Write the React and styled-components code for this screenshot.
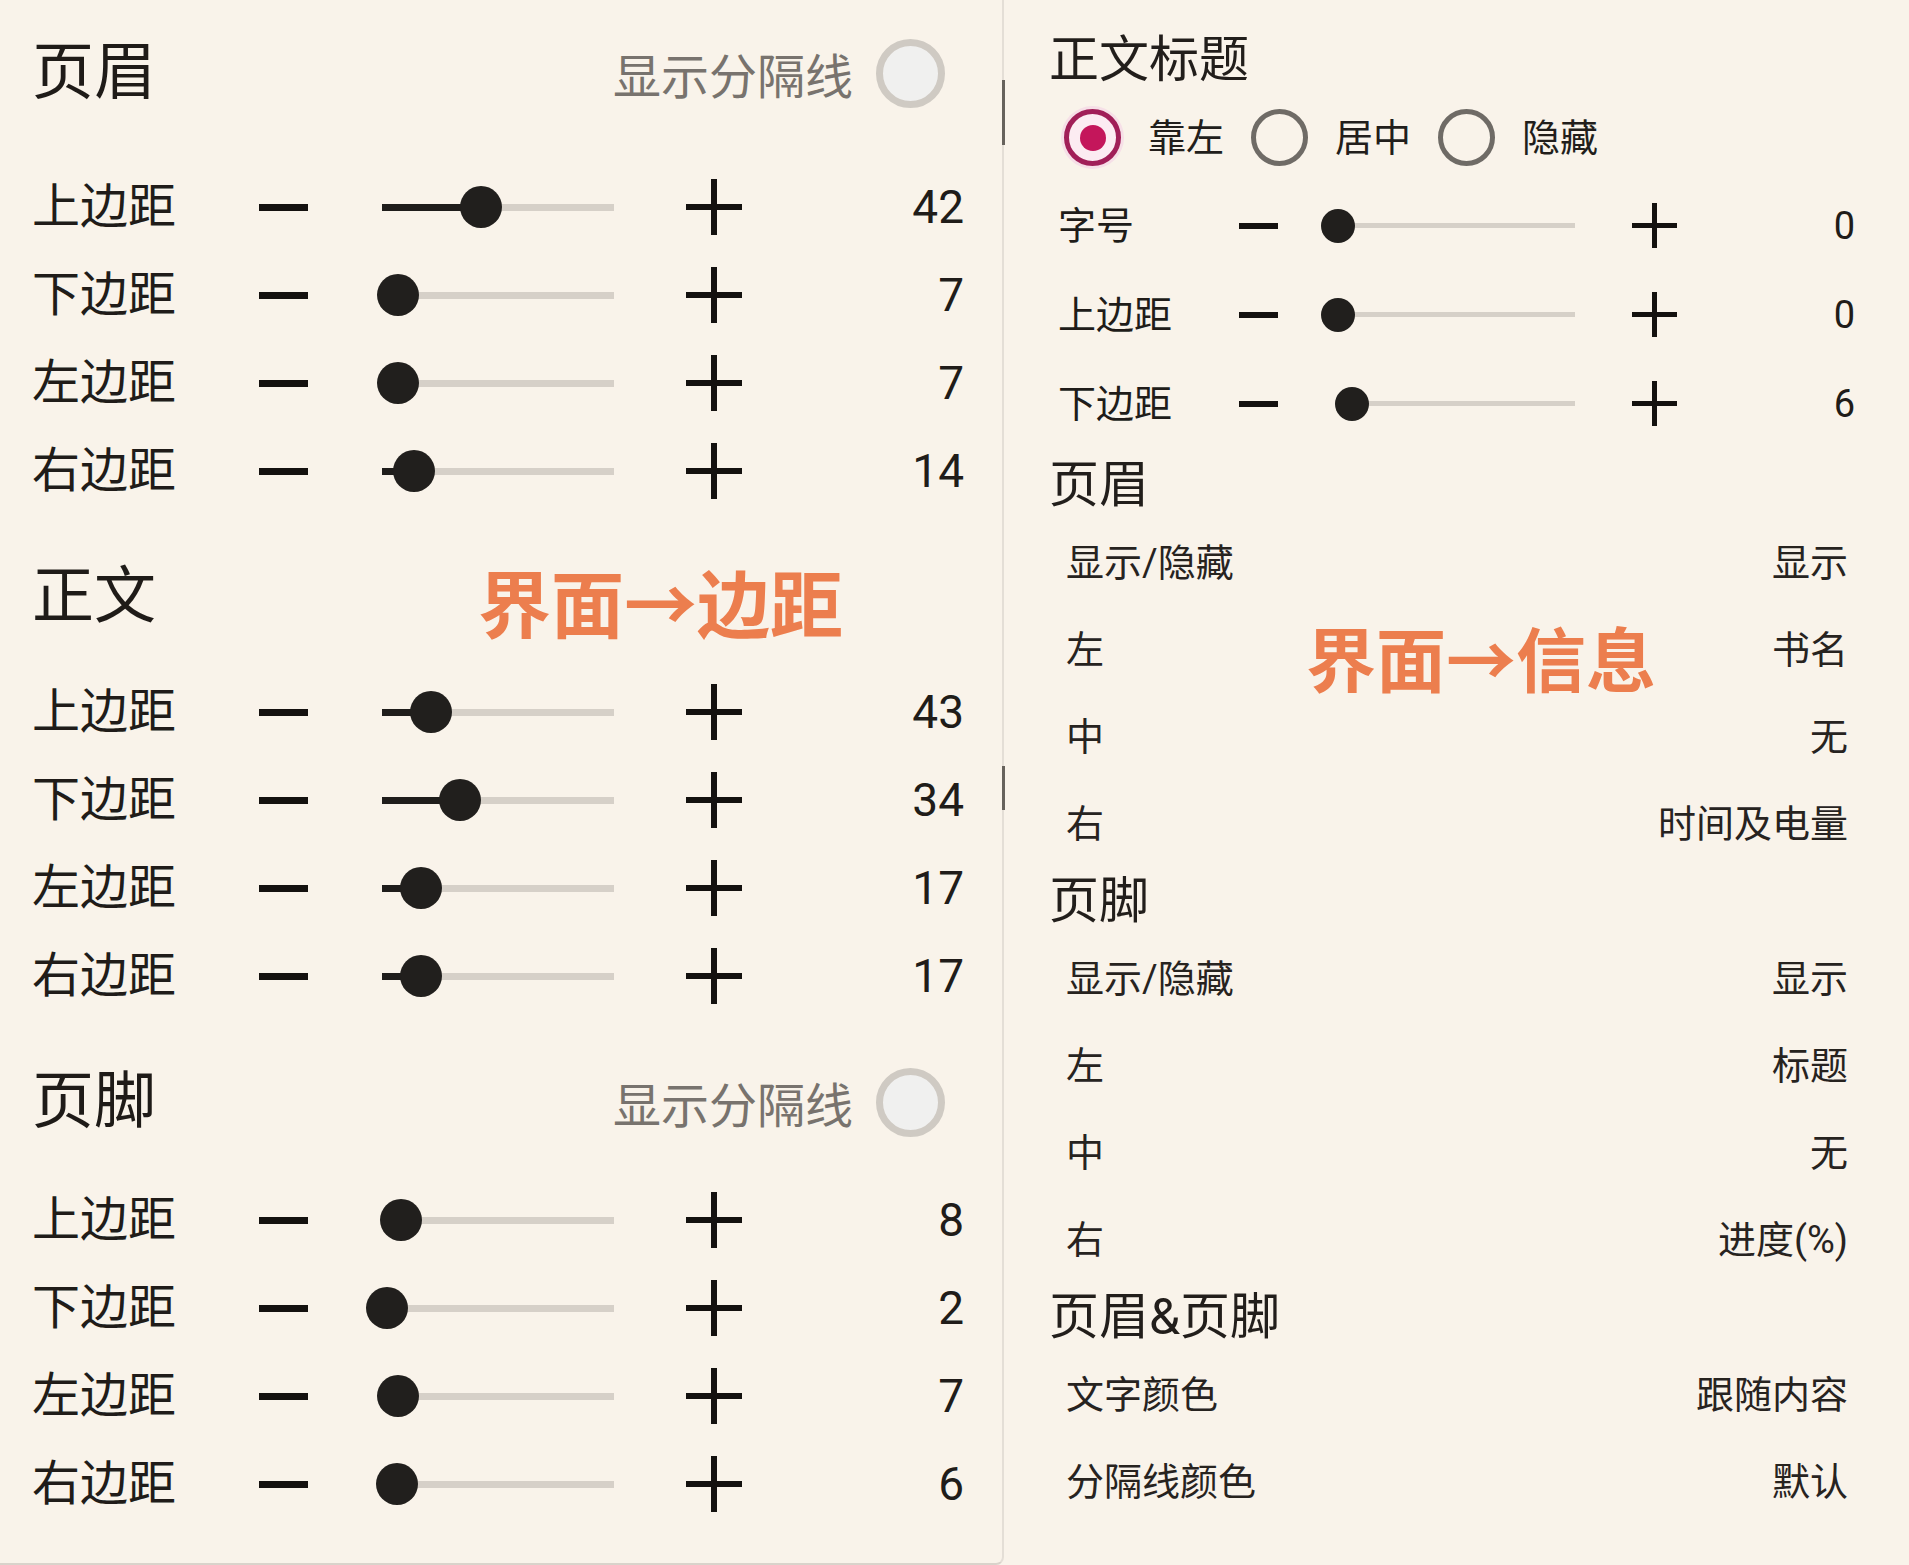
import React from "react";
import styled, { createGlobalStyle } from "styled-components";

const GlobalStyle = createGlobalStyle`
  html, body {
    margin: 0;
    padding: 0;
    background: #f9f3ea;
  }
  body {
    font-family: Roboto, "Noto Sans CJK SC", sans-serif;
    color: #201c19;
  }
  * {
    box-sizing: border-box;
  }
`;

const Screen = styled.div`
  display: flex;
  width: 1909px;
  height: 1565px;
  overflow: hidden;
  background: #f9f3ea;
`;

const LeftPanel = styled.div`
  position: relative;
  flex: none;
  width: 1004px;
  height: 1565px;
  padding: 0 38px 0 32px;
  display: flex;
  flex-direction: column;
  border-right: 2px solid #e4ded6;
  border-bottom: 2px solid #d9d3cb;
  border-bottom-right-radius: 8px;
`;

const RightPanel = styled.div`
  position: relative;
  flex: 1;
  height: 1565px;
  padding: 26px 54px 0 45px;
  display: flex;
  flex-direction: column;
`;

const ScrollThumb = styled.div`
  position: absolute;
  right: -3px;
  width: 3px;
  top: ${(p) => p.$top}px;
  height: ${(p) => p.$h}px;
  background: #67625c;
`;

const Section = styled.section`
  padding-top: ${(p) => p.$top}px;
  display: flex;
  flex-direction: column;
`;

const SectionHead = styled.div`
  height: 100px;
  margin-bottom: ${(p) => p.$gap}px;
  padding-right: 19px;
  display: flex;
  align-items: center;
  justify-content: space-between;
`;

const BigTitle = styled.h2`
  margin: 0;
  font-size: 62px;
  line-height: 1;
  font-weight: 400;
  color: #1f1b18;
`;

const DividerToggle = styled.div`
  display: flex;
  align-items: center;
  gap: 23px;
  font-size: 48px;
  color: #78736e;
`;

const ToggleKnob = styled.span`
  width: 69px;
  height: 69px;
  border-radius: 50%;
  border: 7px solid #cfcac3;
  background: #f0f0ef;
`;

const Row = styled.div`
  height: ${(p) => p.$h}px;
  padding-left: ${(p) => p.$indent || 0}px;
  display: flex;
  align-items: center;
`;

const Label = styled.span`
  flex: none;
  width: ${(p) => p.$w}px;
  font-size: ${(p) => p.$fs}px;
  line-height: 1;
  color: #201c19;
`;

const IconBox = styled.span`
  flex: none;
  display: flex;
  margin-right: ${(p) => p.$mr || 0}px;
`;

const Value = styled.span`
  flex: 1;
  text-align: right;
  font-size: ${(p) => p.$fs}px;
  line-height: 1;
  color: #201c19;
`;

const Track = styled.div`
  position: relative;
  flex: none;
  width: ${(p) => p.$w}px;
  height: ${(p) => p.$h}px;
  margin-right: ${(p) => p.$mr}px;
  background: #d6d0c8;
`;

const TrackFill = styled.div`
  position: absolute;
  left: 0;
  top: 0;
  bottom: 0;
  background: #1f1d1b;
`;

const Thumb = styled.div`
  position: absolute;
  top: 50%;
  width: ${(p) => p.$d}px;
  height: ${(p) => p.$d}px;
  margin-left: ${(p) => -p.$d / 2}px;
  margin-top: ${(p) => -p.$d / 2}px;
  border-radius: 50%;
  background: #211f1d;
`;

const Annotation = styled.span`
  position: absolute;
  left: ${(p) => p.$left}px;
  top: ${(p) => p.$top}px;
  font-family: "Noto Sans CJK SC", sans-serif;
  font-size: ${(p) => p.$fs}px;
  font-weight: 700;
  line-height: 1;
  color: #ec7e4e;
  white-space: nowrap;
`;

const PanelTitle = styled.h3`
  margin: ${(p) => p.$mt || 0}px 0 0;
  height: 68px;
  display: flex;
  align-items: center;
  font-size: 50px;
  font-weight: 400;
  line-height: 1;
  color: #221e1b;
`;

const RadioRow = styled.div`
  height: 87px;
  padding-left: 15px;
  display: flex;
  align-items: center;
`;

const Radio = styled.span`
  flex: none;
  width: 57px;
  height: 57px;
  border-radius: 50%;
  border: 5px solid ${(p) => (p.$on ? "#a11f58" : "#6f6b66")};
  background: ${(p) => (p.$on ? "#fcecf2" : "transparent")};
  box-shadow: ${(p) => (p.$on ? "0 0 0 3px #f6dfe7" : "none")};
  display: flex;
  align-items: center;
  justify-content: center;
  &::after {
    content: "";
    display: ${(p) => (p.$on ? "block" : "none")};
    width: 26px;
    height: 26px;
    border-radius: 50%;
    background: #c4165b;
  }
`;

const RadioText = styled.span`
  margin: 0 27px;
  font-size: 38px;
  line-height: 1;
  color: #221e1b;
`;

const ListRow = styled.div`
  height: 87px;
  padding: 0 7px 0 17px;
  display: flex;
  align-items: center;
  justify-content: space-between;
  font-size: 38px;
  line-height: 1;
  color: #27231f;
`;

const Minus = ({ w, t }) => (
  <svg width={w} height={t} viewBox={`0 0 ${w} ${t}`}>
    <rect x="0" y="0" width={w} height={t} fill="#14110f" />
  </svg>
);

const Plus = ({ s, t }) => (
  <svg width={s} height={s} viewBox={`0 0 ${s} ${s}`}>
    <path
      d={`M${s / 2} 0V${s}M0 ${s / 2}H${s}`}
      stroke="#14110f"
      strokeWidth={t}
      fill="none"
    />
  </svg>
);

const SIZES = {
  lg: {
    rowH: 88,
    labelW: 227,
    labelFs: 48,
    minusW: 49,
    minusT: 7,
    minusMr: 74,
    trackW: 232,
    trackH: 7,
    trackMr: 72,
    thumb: 42,
    plus: 56,
    plusT: 6,
    valueFs: 46,
    indent: 0,
  },
  sm: {
    rowH: 89,
    labelW: 181,
    labelFs: 38,
    minusW: 39,
    minusT: 6,
    minusMr: 60,
    trackW: 237,
    trackH: 5,
    trackMr: 57,
    thumb: 34,
    plus: 45,
    plusT: 5,
    valueFs: 38,
    indent: 9,
  },
};

const SliderRow = ({ label, value, pos, size = "lg" }) => {
  const s = SIZES[size];
  return (
    <Row $h={s.rowH} $indent={s.indent}>
      <Label $w={s.labelW} $fs={s.labelFs}>
        {label}
      </Label>
      <IconBox $mr={s.minusMr}>
        <Minus w={s.minusW} t={s.minusT} />
      </IconBox>
      <Track $w={s.trackW} $h={s.trackH} $mr={s.trackMr}>
        <TrackFill style={{ width: `${pos * 100}%` }} />
        <Thumb $d={s.thumb} style={{ left: `${pos * 100}%` }} />
      </Track>
      <IconBox>
        <Plus s={s.plus} t={s.plusT} />
      </IconBox>
      <Value $fs={s.valueFs}>{value}</Value>
    </Row>
  );
};

const leftSections = [
  {
    title: "页眉",
    toggle: true,
    top: 23,
    gap: 40,
    rows: [
      ["上边距", 42, 0.427],
      ["下边距", 7, 0.069],
      ["左边距", 7, 0.069],
      ["右边距", 14, 0.138],
    ],
  },
  {
    title: "正文",
    toggle: false,
    top: 32,
    gap: 21,
    rows: [
      ["上边距", 43, 0.211],
      ["下边距", 34, 0.336],
      ["左边距", 17, 0.168],
      ["右边距", 17, 0.168],
    ],
  },
  {
    title: "页脚",
    toggle: true,
    top: 32,
    gap: 24,
    rows: [
      ["上边距", 8, 0.082],
      ["下边距", 2, 0.022],
      ["左边距", 7, 0.069],
      ["右边距", 6, 0.065],
    ],
  },
];

const headerRows = [
  ["显示/隐藏", "显示"],
  ["左", "书名"],
  ["中", "无"],
  ["右", "时间及电量"],
];

const footerRows = [
  ["显示/隐藏", "显示"],
  ["左", "标题"],
  ["中", "无"],
  ["右", "进度(%)"],
];

const bothRows = [
  ["文字颜色", "跟随内容"],
  ["分隔线颜色", "默认"],
];

const App = () => {
  return (
    <>
      <GlobalStyle />
      <Screen>
        <LeftPanel>
          <ScrollThumb $top={80} $h={65} />
          <ScrollThumb $top={766} $h={44} />
          {leftSections.map((sec) => (
            <Section key={sec.title} $top={sec.top}>
              <SectionHead $gap={sec.gap}>
                <BigTitle>{sec.title}</BigTitle>
                {sec.toggle && (
                  <DividerToggle>
                    <span>显示分隔线</span>
                    <ToggleKnob />
                  </DividerToggle>
                )}
              </SectionHead>
              {sec.rows.map(([label, value, pos]) => (
                <SliderRow key={label} label={label} value={value} pos={pos} />
              ))}
            </Section>
          ))}
          <Annotation $left={478} $top={564} $fs={73}>
            界面→边距
          </Annotation>
        </LeftPanel>

        <RightPanel>
          <PanelTitle>正文标题</PanelTitle>
          <RadioRow>
            <Radio $on />
            <RadioText>靠左</RadioText>
            <Radio />
            <RadioText>居中</RadioText>
            <Radio />
            <RadioText>隐藏</RadioText>
          </RadioRow>
          <SliderRow size="sm" label="字号" value={0} pos={0} />
          <SliderRow size="sm" label="上边距" value={0} pos={0} />
          <SliderRow size="sm" label="下边距" value={6} pos={0.059} />

          <PanelTitle $mt={3}>页眉</PanelTitle>
          {headerRows.map(([k, v]) => (
            <ListRow key={k}>
              <span>{k}</span>
              <span>{v}</span>
            </ListRow>
          ))}

          <PanelTitle>页脚</PanelTitle>
          {footerRows.map(([k, v]) => (
            <ListRow key={k}>
              <span>{k}</span>
              <span>{v}</span>
            </ListRow>
          ))}

          <PanelTitle>页眉&amp;页脚</PanelTitle>
          {bothRows.map(([k, v]) => (
            <ListRow key={k}>
              <span>{k}</span>
              <span>{v}</span>
            </ListRow>
          ))}

          <Annotation $left={302} $top={622} $fs={70}>
            界面→信息
          </Annotation>
        </RightPanel>
      </Screen>
    </>
  );
};

export default App;
